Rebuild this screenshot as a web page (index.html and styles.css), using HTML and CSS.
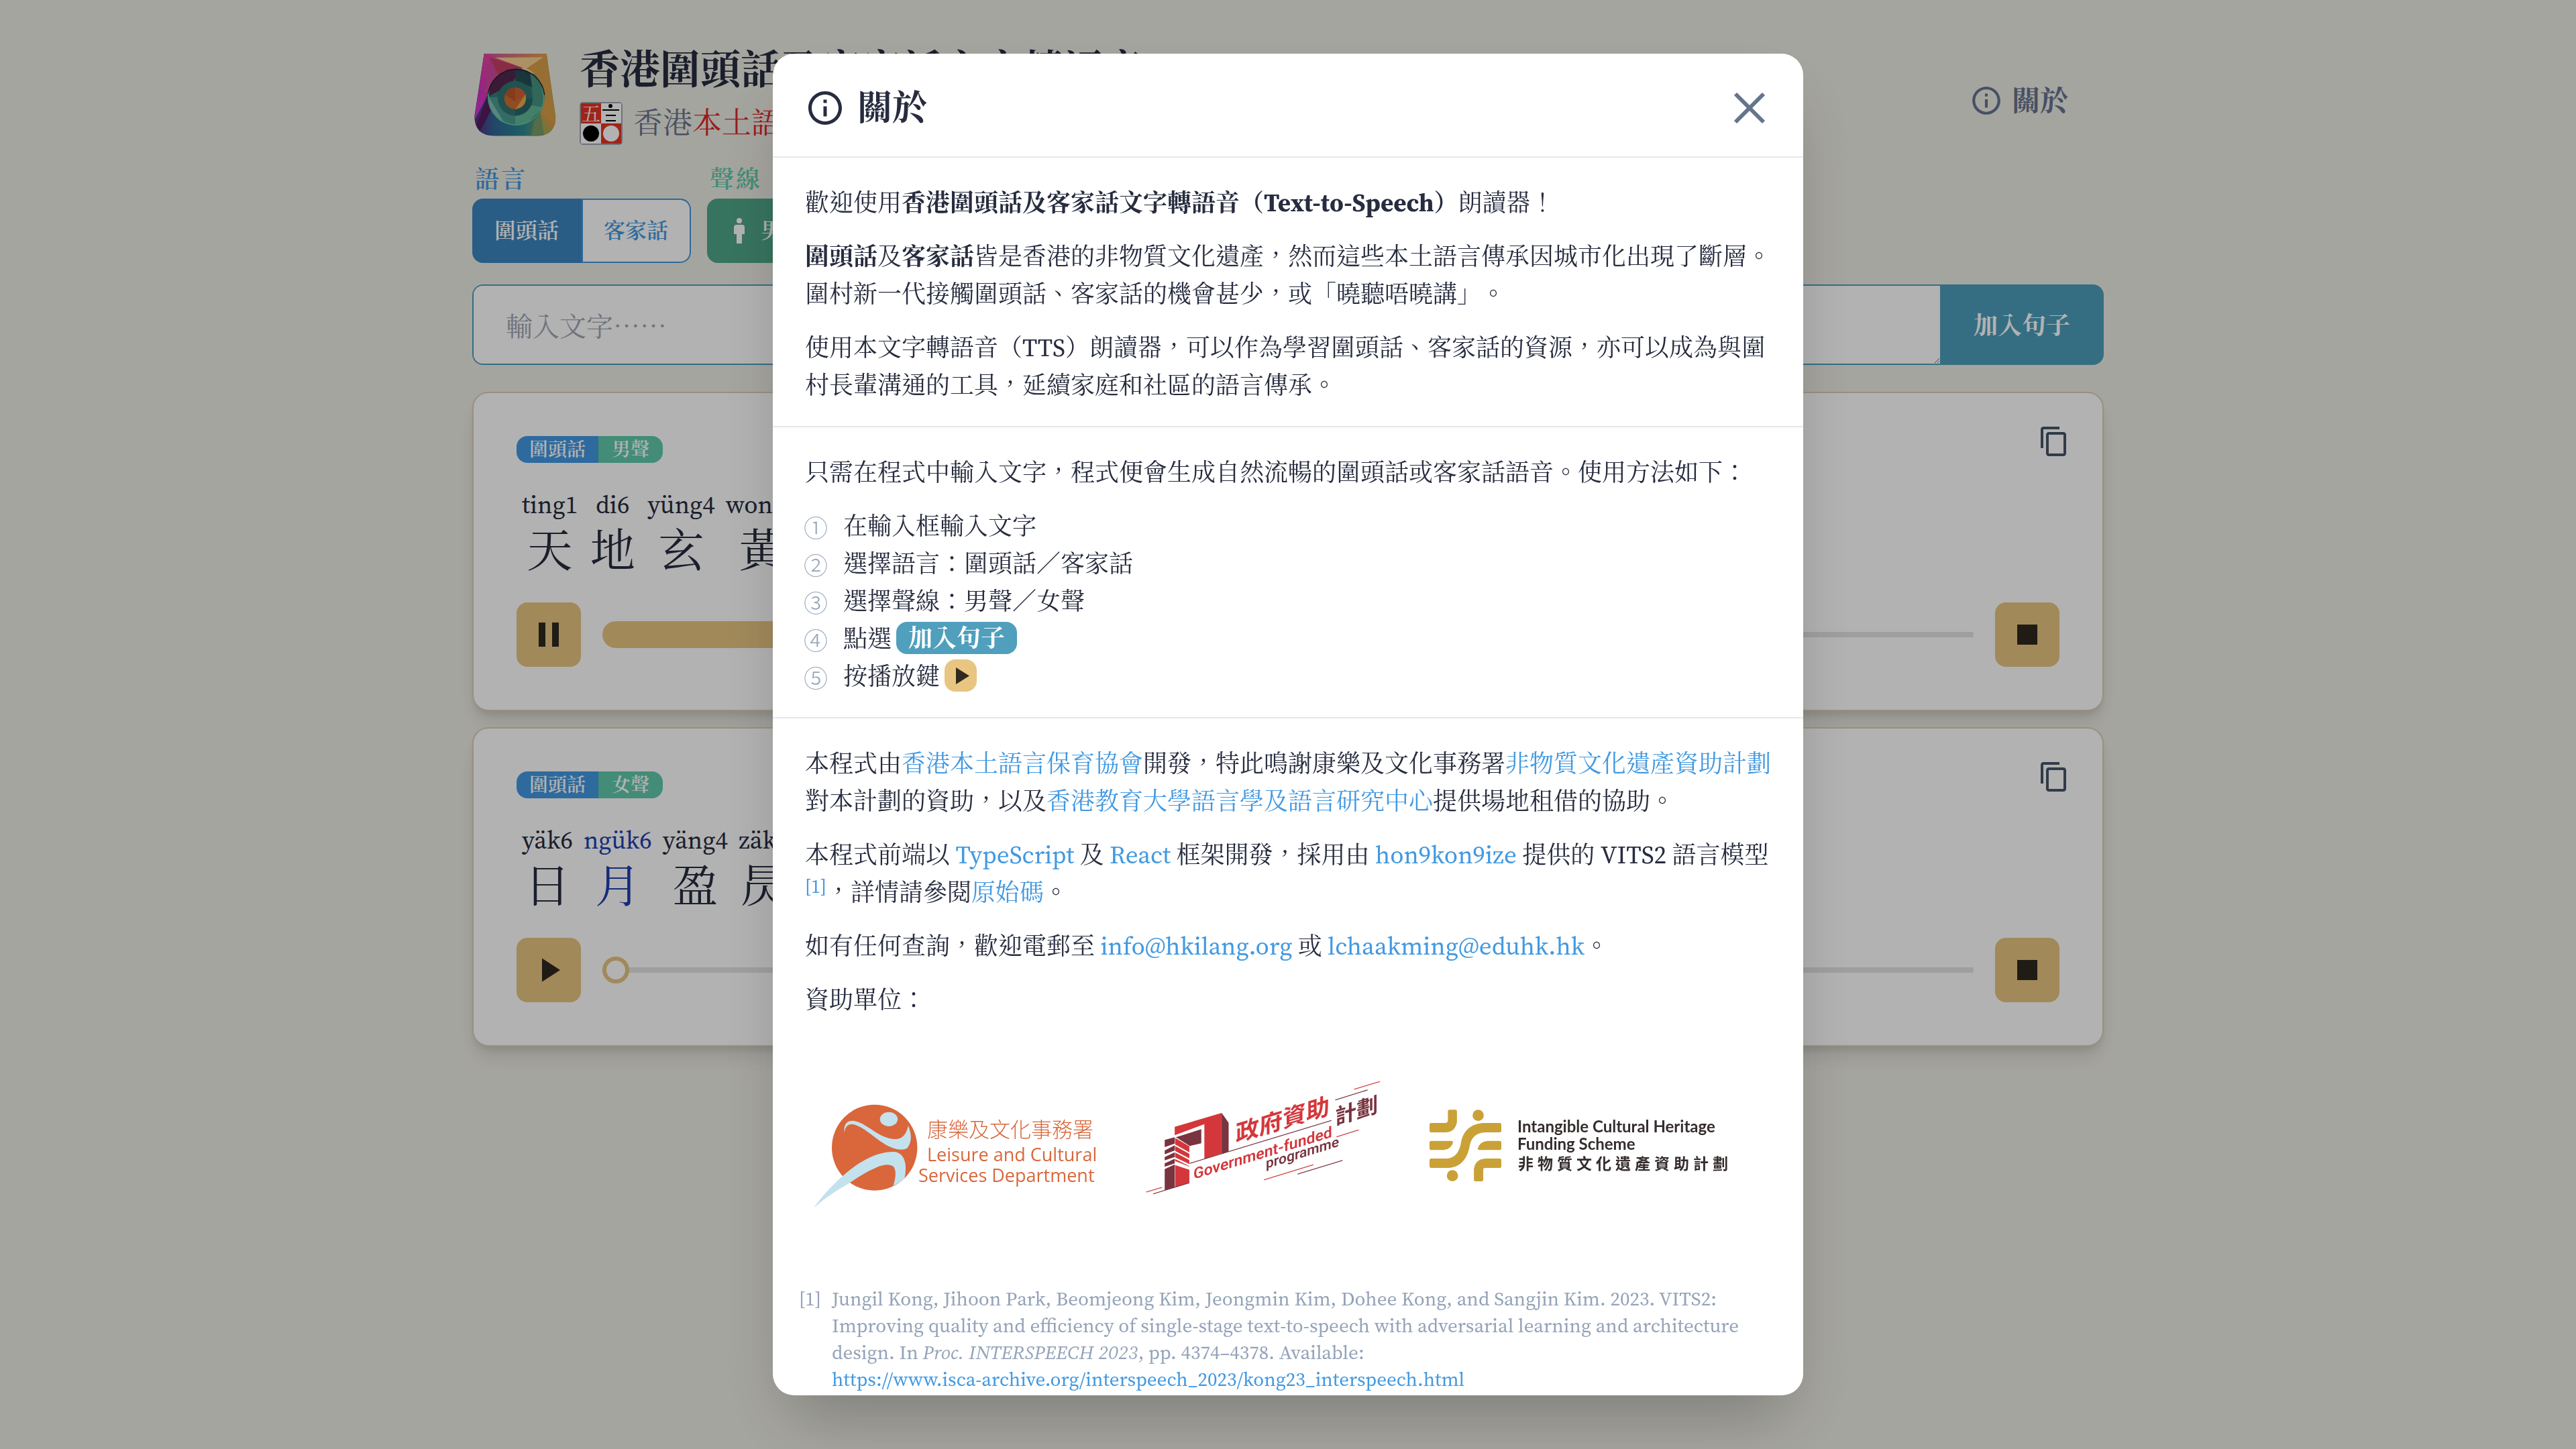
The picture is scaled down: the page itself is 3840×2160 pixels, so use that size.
FILE: index.html
```html
<!DOCTYPE html>
<html lang="zh-HK">
<head>
<meta charset="utf-8">
<title>香港圍頭話及客家話文字轉語音</title>
<link rel="stylesheet" href="styles.css">
</head>
<body>
<main class="page">
  <header class="header">
    <svg class="app-logo" viewBox="20 26 368 374" preserveAspectRatio="none" aria-hidden="true">
      <defs>
        <clipPath id="body-clip"><path d="M64 29H345L386 310Q389 398 300 399H110Q20 398 21 310Z"/></clipPath>
        <clipPath id="ring-clip"><circle cx="208" cy="224" r="128"/></clipPath>
        <linearGradient id="bottom" x1="0" x2="1"><stop offset="0" stop-color="#5b2b80"/><stop offset=".25" stop-color="#2e6797"/><stop offset=".6" stop-color="#2d8791"/><stop offset=".8" stop-color="#6c9a68"/><stop offset="1" stop-color="#c8a655"/></linearGradient>
        <linearGradient id="side" x1="0" x2="0" y1="0" y2="1"><stop offset="0" stop-color="#e8449c"/><stop offset=".6" stop-color="#d433c4"/><stop offset="1" stop-color="#d936e0"/></linearGradient>
        <linearGradient id="top" x1="0" x2="1"><stop offset="0" stop-color="#cc4fa0"/><stop offset="1" stop-color="#e2a04c"/></linearGradient>
      </defs>
      <g clip-path="url(#body-clip)">
        <rect x="20" y="26" width="370" height="375" fill="url(#bottom)"/>
        <path d="M64 29H345L325 100 200 95Z" fill="url(#top)"/>
        <path d="M95 47L330 45 290 120 200 92Z" fill="#f7d090"/>
        <path d="M64 29L238 93 80 215 20 330Z" fill="url(#side)"/>
        <path d="M90 47L238 93Q130 100 84 190Z" fill="#c43f62"/>
        <path d="M90 47L130 130 84 190 60 230Z" fill="#cf489c"/>
        <path d="M80 215L30 350 45 380 95 285Z" fill="#571d60"/>
        <path d="M345 29L388 345 330 400 318 300Z" fill="#d69a48"/>
        <path d="M345 29L330 45 255 95Q330 130 335 230L318 300 386 345Z" fill="#d9a04a"/>
        <path d="M318 300L340 400H275L290 330Z" fill="#799c68"/>
        <path d="M318 300L370 380 335 400Z" fill="#afa653"/>
      </g>
      <g clip-path="url(#ring-clip)">
        <rect x="78" y="94" width="262" height="262" fill="#347d78"/>
        <path d="M78 94H238L180 170 78 224Z" fill="#54274f"/>
        <path d="M204 90L300 110 280 180 204 150Z" fill="#264c55"/>
        <path d="M270 110L340 180V300L280 260V180Z" fill="#479482"/>
        <path d="M78 224H150L204 300V360H150Z" fill="#499a91"/>
        <path d="M204 308L270 260 330 270 240 360H204Z" fill="#62b697"/>
        <path d="M82 220L158 345Q90 310 82 220Z" fill="#83bfb4"/>
      </g>
      <circle cx="208" cy="224" r="125" fill="none" stroke="#5fc8a2" stroke-width="5" stroke-dasharray="480 320" stroke-dashoffset="60"/>
      <path d="M82 210A128 128 0 0 1 336 215" fill="none" stroke="#281a2c" stroke-width="4"/>
      <circle cx="204" cy="230" r="78" fill="#327572"/>
      <path d="M204 308A78 78 0 0 0 282 230H204Z" fill="#28666a"/>
      <circle cx="204" cy="230" r="49" fill="#ce6d31"/>
      <path d="M204 181A49 49 0 0 1 250 212L204 243Z" fill="#d26036"/>
      <path d="M158 212A49 49 0 0 1 204 181V243Z" fill="#bd5627"/>
      <path d="M250 212Q262 265 204 279L230 242Z" fill="#e9ac4a"/>
    </svg>
    <div class="titles">
      <h1 class="title">香港圍頭話及客家話文字轉語音</h1>
      <p class="subtitle">
        <svg class="org-logo" viewBox="0 0 64 64" aria-hidden="true">
          <rect width="64" height="64" rx="5" fill="#9ca3af"/>
          <rect x="2" y="2" width="60" height="60" fill="#fff"/>
          <path d="M2 2H32V32H2ZM32 32H62V62H32Z" fill="#e23424"/>
          <text class="org-char" x="3" y="28">五</text>
          <circle cx="46" cy="6" r="3"/><path d="M34 11H59V13H34ZM39 19H54V21H39ZM39 27H54V29H39Z"/>
          <circle cx="17" cy="47" r="12"/><circle cx="47" cy="47" r="12" fill="#fff"/>
        </svg>
        <span>香港<span class="red">本土語言</span>保育協會</span>
      </p>
    </div>
    <button class="about" type="button"><svg class="about-icon" viewBox="0 0 24 24" aria-hidden="true"><path d="M11 7h2v2h-2zm0 4h2v6h-2zm1-9C6.480 2 2 6.480 2 12s4.480 10 10 10 10-4.480 10-10S17.520 2 12 2zm0 18c-4.410 0-8-3.590-8-8s3.590-8 8-8 8 3.590 8 8-3.590 8-8 8z"/></svg>關於</button>
  </header>

  <div class="options">
    <div class="option">
      <span class="option-label blue">語言</span>
      <div class="group"><button class="choice lang on" type="button">圍頭話</button><button class="choice lang" type="button">客家話</button></div>
    </div>
    <div class="option">
      <span class="option-label green">聲線</span>
      <div class="group"><button class="choice voice on" type="button"><svg class="person" viewBox="0 0 16 38" aria-hidden="true"><circle cx="8" cy="4" r="4"/><path d="M4 10h8q4 0 4 4v10h-4v14H4V24H0V14q0-4 4-4z"/></svg>男聲</button><button class="choice voice" type="button">女聲</button></div>
    </div>
  </div>

  <form class="entry">
    <textarea class="entry-text" aria-label="輸入文字" placeholder="輸入文字⋯⋯"></textarea>
    <button class="entry-add" type="button">加入句子</button>
  </form>

  <section class="card">
    <div class="tags"><span class="tag tag-lang">圍頭話</span><span class="tag tag-voice">男聲</span></div>
    <button class="copy" type="button" aria-label="複製"><svg viewBox="0 0 24 24"><path d="M16 1H4c-1.100 0-2 .9-2 2v14h2V3h12V1zm3 4H8c-1.100 0-2 .9-2 2v14c0 1.100.9 2 2 2h11c1.100 0 2-.9 2-2V7c0-1.100-.9-2-2-2zm0 16H8V7h11v14z"/></svg></button>
    <div class="sentence">
      <span class="word"><span>ting1</span><b>天</b></span><span class="word"><span>di6</span><b>地</b></span><span class="word"><span>yüng4</span><b>玄</b></span><span class="word"><span>wong4</span><b>黃</b></span>
    </div>
    <div class="player">
      <button class="square" type="button" aria-label="暫停"><svg viewBox="0 0 96 96"><path d="M33 30h10v36H33zM53 30h10v36H53z"/></svg></button>
      <input class="seek playing" type="range" min="0" max="100" value="40" aria-label="播放進度">
      <button class="square" type="button" aria-label="停止"><svg viewBox="0 0 96 96"><path d="M33 33h30v30H33z"/></svg></button>
    </div>
  </section>

  <section class="card">
    <div class="tags"><span class="tag tag-lang">圍頭話</span><span class="tag tag-voice">女聲</span></div>
    <button class="copy" type="button" aria-label="複製"><svg viewBox="0 0 24 24"><path d="M16 1H4c-1.100 0-2 .9-2 2v14h2V3h12V1zm3 4H8c-1.100 0-2 .9-2 2v14c0 1.100.9 2 2 2h11c1.100 0 2-.9 2-2V7c0-1.100-.9-2-2-2zm0 16H8V7h11v14z"/></svg></button>
    <div class="sentence">
      <span class="word"><span>yäk6</span><b>日</b></span><span class="word current"><span>ngük6</span><b>月</b></span><span class="word"><span>yäng4</span><b>盈</b></span><span class="word"><span>zäk5</span><b>昃</b></span>
    </div>
    <div class="player">
      <button class="square" type="button" aria-label="播放"><svg viewBox="0 0 96 96"><path d="M38 30.500v35L65 48z"/></svg></button>
      <input class="seek" type="range" min="0" max="100" value="0" aria-label="播放進度">
      <button class="square" type="button" aria-label="停止"><svg viewBox="0 0 96 96"><path d="M33 33h30v30H33z"/></svg></button>
    </div>
  </section>
</main>

<div class="overlay">
  <div class="modal" role="dialog" aria-modal="true" aria-labelledby="about-title">
    <header class="modal-head">
      <svg class="head-icon" viewBox="0 0 24 24" aria-hidden="true"><path d="M11 7h2v2h-2zm0 4h2v6h-2zm1-9C6.480 2 2 6.480 2 12s4.480 10 10 10 10-4.480 10-10S17.520 2 12 2zm0 18c-4.410 0-8-3.590-8-8s3.590-8 8-8 8 3.590 8 8-3.590 8-8 8z"/></svg>
      <h2 class="modal-title" id="about-title">關於</h2>
      <button class="close" type="button" aria-label="關閉"><svg viewBox="0 0 48 48"><path d="M3 3L45 45M45 3L3 45"/></svg></button>
    </header>
    <section class="block">
      <p>歡迎使用<strong>香港圍頭話及客家話文字轉語音（<span class="latin">Text-to-Speech</span>）</strong>朗讀器！</p>
      <p><strong>圍頭話</strong>及<strong>客家話</strong>皆是香港的非物質文化遺產，然而這些本土語言傳承因城市化出現了斷層。圍村新一代接觸圍頭話、客家話的機會甚少，或「曉聽唔曉講」。</p>
      <p>使用本文字轉語音（<span class="latin">TTS</span>）朗讀器，可以作為學習圍頭話、客家話的資源，亦可以成為與圍村長輩溝通的工具，延續家庭和社區的語言傳承。</p>
    </section>
    <section class="block">
      <p>只需在程式中輸入文字，程式便會生成自然流暢的圍頭話或客家話語音。使用方法如下：</p>
      <ol class="steps">
        <li><span class="num">①</span>在輸入框輸入文字</li>
        <li><span class="num">②</span>選擇語言：圍頭話／客家話</li>
        <li><span class="num">③</span>選擇聲線：男聲／女聲</li>
        <li><span class="num">④</span>點選<span class="chip chip-add">加入句子</span></li>
        <li><span class="num">⑤</span>按播放鍵<span class="chip chip-play"><svg viewBox="0 0 48 48" aria-hidden="true"><path d="M17 12v25L37 24.500z"/></svg></span></li>
      </ol>
    </section>
    <section class="block">
      <p>本程式由<a href="#org">香港本土語言保育協會</a>開發，特此鳴謝康樂及文化事務署<a href="#fund">非物質文化遺產資助計劃</a>對本計劃的資助，以及<a href="#eduhk">香港教育大學語言學及語言研究中心</a>提供場地租借的協助。</p>
      <p>本程式前端以 <a class="latin" href="#ts">TypeScript</a> 及 <a class="latin" href="#react">React</a> 框架開發，採用由 <a class="latin" href="#hon">hon9kon9ize</a> 提供的 <span class="latin">VITS2</span> 語言模型<wbr><a class="cite" href="#ref1">[1]</a>，詳情請參閱<a href="#source">原始碼</a>。</p>
      <p>如有任何查詢，歡迎電郵至 <a class="latin" href="mailto:info@hkilang.org">info@hkilang.org</a> 或 <a class="latin" href="mailto:lchaakming@eduhk.hk">lchaakming@eduhk.hk</a>。</p>
      <p>資助單位：</p>
      <div class="logos">
        <svg class="logo-a" viewBox="1200 1580 460 240" role="img" aria-label="康樂及文化事務署">
          <g transform="translate(1180 1580) scale(.574 .3333)">
            <ellipse cx="215.500" cy="389" rx="111" ry="192" fill="#d9673b"/>
            <g fill="#c3e2ed">
              <ellipse cx="252.500" cy="262" rx="23" ry="32"/>
              <path d="M137 322C135 285 143 268 160 269C195 275 225 350 270 351Q296 350 303 290C312 330 313 365 300 392Q287 405 265 392C225 370 190 290 155 284Q140 285 137 322Z"/>
              <path d="M58 658C80 600 130 510 175 460Q225 405 268 408Q293 415 296 470Q297 505 293 528Q280 548 264 560Q275 500 265 475Q250 455 218 480Q190 500 150 548Q100 595 58 658Z"/>
            </g>
          </g>
          <g fill="#d9673b"><text class="lcsd-zh" x="1382" y="1694">康樂及文化事務署</text><text class="lcsd-en" x="1382" y="1730">Leisure and Cultural</text><text class="lcsd-en" x="1369" y="1761">Services Department</text></g>
        </svg>
        <svg class="logo-b" viewBox="1660 1580 440 240" role="img" aria-label="政府資助計劃">
          <g transform="translate(1180 1580) scale(.574 .3333)">
            <path d="M995 296L1117 234V414L1072 440V284L995 334Z" fill="#d4373b"/>
            <path d="M1117 234L1135 278V406L1117 418ZM998 343L1064 307V370L1034 382ZM969 355L995 343V371L969 387ZM969 402L995 379V402L969 419ZM969 431L995 410V431L969 446ZM969 460L995 439V460L969 475ZM969 485L995 464V568L969 580Z" fill="#78343f"/>
            <path d="M996 346L1033 383V410L996 375ZM996 382L1033 417V437L996 404ZM996 411L1033 445V463L996 433ZM996 440L1033 472V478L1033 546L996 566V467L1033 488V474L996 449Z" fill="#d4373b"/>
            <g fill="none" stroke-width="3.500"><path d="M1034 460L1402 268M1412 176L1496 131M1314 508L1431 446M939 596L1033 547" stroke="#78343f"/><path d="M1461 128L1528 94M1415 341L1473 310M1227 533L1355 466M921 588L962 567" stroke="#d4373b"/></g>
          </g>
          <g fill="#d4373b"><text class="gov-zh" transform="translate(1842 1702) skewY(-17)">政府資助</text><text class="gov-en" transform="translate(1779 1757) skewY(-17)">Government-funded</text></g>
          <g fill="#78343f"><text class="gov-plan" transform="translate(1990 1676) skewY(-17)">計劃</text><text class="gov-sub" transform="translate(1887 1741) skewY(-17)">programme</text></g>
        </svg>
        <svg class="logo-c" viewBox="2100 1580 540 240" role="img" aria-label="非物質文化遺產資助計劃">
          <g transform="translate(2080 1580) scale(.4082 .3333)" fill="#c9a137">
            <path d="M192 226Q192 220 198 220H219Q225 220 225 226V275Q218 318 186 321H131Q125 321 125 315V286Q125 279 131 279H182Q192 278 192 266Z"/>
            <path d="M131 359H205Q211 359 211 365Q204 396 176 400H131Q125 400 125 394V366Q125 359 131 359Z"/>
            <path d="M381 359Q387 359 387 366V394Q387 400 381 400H307Q301 400 301 394Q308 361 338 359Z"/>
            <path d="M381 279Q387 279 387 286V315Q387 321 381 321H328Q282 323 272 378C264 440 238 477 194 480H131Q125 480 125 474V446Q125 438 131 438H186C220 436 234 408 240 365C248 315 275 281 325 279Z"/>
            <path d="M381 438Q387 438 387 446V474Q387 480 381 480H326Q321 480 321 488V534Q321 540 315 540H293Q287 540 287 534V485Q292 440 330 438Z"/>
            <ellipse cx="302.500" cy="245" rx="20.500" ry="25"/><ellipse cx="208.500" cy="515" rx="20.500" ry="25"/>
          </g>
          <g fill="#352d2d"><text class="ich-en" x="2262" y="1687">Intangible Cultural Heritage</text><text class="ich-en" x="2262" y="1713">Funding Scheme</text><text class="ich-zh" x="2263" y="1742">非物質文化遺產資助計劃</text></g>
        </svg>
      </div>
      <div class="refs" id="ref1"><span class="ref-no">[1]</span><p class="ref">Jungil Kong, Jihoon Park, Beomjeong Kim, Jeongmin Kim, Dohee Kong, and Sangjin Kim. 2023. VITS2:<br>Improving quality and efficiency of single-stage text-to-speech with adversarial learning and architecture<br>design. In <i>Proc. INTERSPEECH 2023</i>, pp. 4374–4378. Available:<br><a href="https://www.isca-archive.org/interspeech_2023/kong23_interspeech.html">https://www.isca-archive.org/interspeech_2023/kong23_interspeech.html</a></p></div>
    </section>
  </div>
</div>
</body>
</html>
```
FILE: styles.css
```css
* { box-sizing: border-box; }
body {
  margin: 0;
  min-height: 100vh;
  overflow: hidden;
  background: #edece4;
  color: #272c3f;
  font-family: "Source Serif 4", "Noto Serif CJK TC", "Liberation Serif", "Noto Sans CJK TC", serif;
  font-size: 36px;
  line-height: 56px;
  text-spacing-trim: space-all;
}
h1, h2, p, ol { margin: 0; padding: 0; }
button { border: 0; padding: 0; background: none; color: inherit; font: inherit; }
a { color: #4299e1; text-decoration: none; }
svg { display: block; }

.page { max-width: 2432px; margin: 0 auto; padding-top: 64px; }
.header { display: flex; align-items: flex-start; }
.app-logo { width: 122px; height: 124px; margin: 15px 0 0 3px; }
.titles { flex: 1; margin-left: 35px; }
.title { padding-top: 4px; font-size: 60px; line-height: 72px; font-weight: 700; }
.subtitle { display: flex; align-items: center; gap: 16px; margin-top: 12px; font-size: 44px; line-height: 64px; color: #6a758f; }
.red { color: #dc2828; }
.org-logo { width: 64px; height: 64px; }
.org-char { font-size: 28px; fill: #fff; }
.about { display: flex; align-items: center; gap: 13px; margin: 58px 53px 0 0; font-size: 42px; font-weight: 700; color: #667390; }
.about-icon { width: 50px; height: 50px; fill: currentColor; }

.options { display: flex; gap: 24px; margin-top: 32px; }
.option-label { display: block; padding-left: 4px; margin-bottom: 8px; font-size: 36px; line-height: 40px; letter-spacing: 3px; font-weight: 600; }
.blue { color: #4299e1; }
.green { color: #60c9ab; }
.group { display: flex; }
.choice { display: flex; align-items: center; justify-content: center; gap: 24px; height: 96px; padding: 0 32px 0 31px; border: 2px solid; background: #fff; font-size: 32px; font-weight: 600; }
.choice:first-child { border-radius: 16px 0 0 16px; }
.choice:last-child { border-radius: 0 16px 16px 0; }
.lang { color: #4299e1; }
.voice { color: #60c9ab; padding: 0 38px; }
.lang.on { background: #3d86bf; border-color: #3d86bf; color: #fff; }
.voice.on { background: #50a68a; border-color: #50a68a; color: #fff; }
.person { width: 16px; height: 38px; fill: currentColor; }

.entry { display: flex; margin: 32px 0 40px; }
.entry-text { flex: 1; height: 120px; padding: 33px 48px 29px; border: 2px solid #4c9eba; border-right: 0; border-radius: 16px 0 0 16px; background: #fff; font: inherit; font-size: 40px; resize: vertical; }
.entry-text::placeholder { color: #9fa6b2; }
.entry-add { padding: 4px 50px 0; border-radius: 0 16px 16px 0; background: #4c9eba; color: #fff; font-size: 36px; font-weight: 700; }

.card { position: relative; height: 476px; margin-bottom: 24px; padding: 64px; border: 2px solid #dccfb5; border-radius: 24px; background: #fff; box-shadow: 0 20px 30px -6px rgba(0, 0, 0, .1), 0 8px 12px -4px rgba(0, 0, 0, .1); display: flex; flex-direction: column; }
.tags { display: flex; }
.tag { padding: 0 20px; font-size: 28px; line-height: 40px; font-weight: 600; color: #fff; }
.tag-lang { padding: 0 19px; border-radius: 16px 0 0 16px; background: #4299e1; }
.tag-voice { border-radius: 0 16px 16px 0; background: #60c9ab; }
.copy { position: absolute; top: 48px; right: 48px; width: 48px; height: 48px; }
.copy svg { fill: #475569; }
.sentence { display: flex; gap: 16px; padding: 34px 8px 0; }
.word { display: flex; flex-direction: column; align-items: center; min-width: 72px; font-size: 37px; line-height: 56px; }
.word b { font-size: 68px; line-height: 84px; font-weight: 400; }
.current { color: #1e40af; }
.player { display: flex; align-items: center; gap: 32px; margin-top: auto; }
.square { width: 96px; height: 96px; border-radius: 16px; background: #e7c581; fill: #2f281f; }
.seek { flex: 1; height: 40px; margin: 0; appearance: none; border-radius: 20px; background: linear-gradient(#e3e4e6, #e3e4e6) center / 100% 8px no-repeat; }
.seek.playing { background: linear-gradient(#e7c581, #e7c581) left / 40% 100% no-repeat, linear-gradient(#e3e4e6, #e3e4e6) center / 100% 8px no-repeat; }
.seek::-webkit-slider-thumb { appearance: none; width: 40px; height: 40px; border: 6px solid #e7c581; border-radius: 50%; background: #fff; }

.overlay { position: fixed; inset: 0; display: flex; align-items: center; justify-content: center; padding: 80px; background: rgba(0, 0, 0, .3); }
.modal { width: 100%; max-width: 1536px; max-height: 100%; overflow: hidden; border-radius: 32px; background: #fff; box-shadow: 0 50px 100px -24px rgba(0, 0, 0, .25); }
.modal-head { display: flex; align-items: center; height: 153px; padding: 8px 48px 0; }
.head-icon { width: 60px; height: 60px; fill: #272c3f; }
.modal-title { flex: 1; margin-left: 18px; font-size: 52px; line-height: 64px; font-weight: 700; }
.close { width: 64px; height: 64px; padding: 8px; }
.close svg { fill: none; stroke: #64748b; stroke-width: 6; }
.block { border-top: 2px solid #e5e7eb; padding: 40px 40px 32px 48px; }
.block > * + * { margin-top: 24px; }
.latin { font-size: 37px; line-height: 1; }
.cite { font-size: 28px; line-height: 1; vertical-align: 12px; }
.steps { list-style: none; }
.steps li { display: flex; align-items: center; height: 56px; }
.num { width: 59px; margin-left: -2px; color: #94a3b8; font-family: "Noto Sans CJK TC", sans-serif; font-weight: 300; }
.chip { height: 48px; margin: 0 0 4px 7px; border-radius: 16px; }
.chip-add { padding: 0 18px; background: #4f9fbd; color: #fff; font-weight: 700; line-height: 50px; }
.chip-play { width: 48px; background: #e9c582; fill: #302820; }
.block > .logos { display: flex; margin: 62px 8px 0 0; }
.logo-a { flex: 460; }
.logo-b { flex: 440; }
.logo-c { flex: 540; }
.lcsd-zh { font: 300 31px "Noto Sans CJK TC", sans-serif; }
.lcsd-en { font: 27px "Open Sans", sans-serif; }
.gov-zh { font: 700 35px "Noto Sans CJK TC", sans-serif; }
.gov-plan { font: 700 32px "Noto Sans CJK TC", sans-serif; }
.gov-en { font: 600 23px Roboto, sans-serif; }
.gov-sub { font: 600 21px Roboto, sans-serif; }
.ich-en { font: 700 24px Lato, sans-serif; }
.ich-zh { font: 700 23px "Noto Sans CJK TC", sans-serif; letter-spacing: 6px; }
.block > .refs { display: flex; margin: 95px 0 0 -9px; font-size: 29px; line-height: 40px; color: #94a3b8; }
.ref-no { width: 49px; }
.ref { flex: 1; white-space: nowrap; }
```
